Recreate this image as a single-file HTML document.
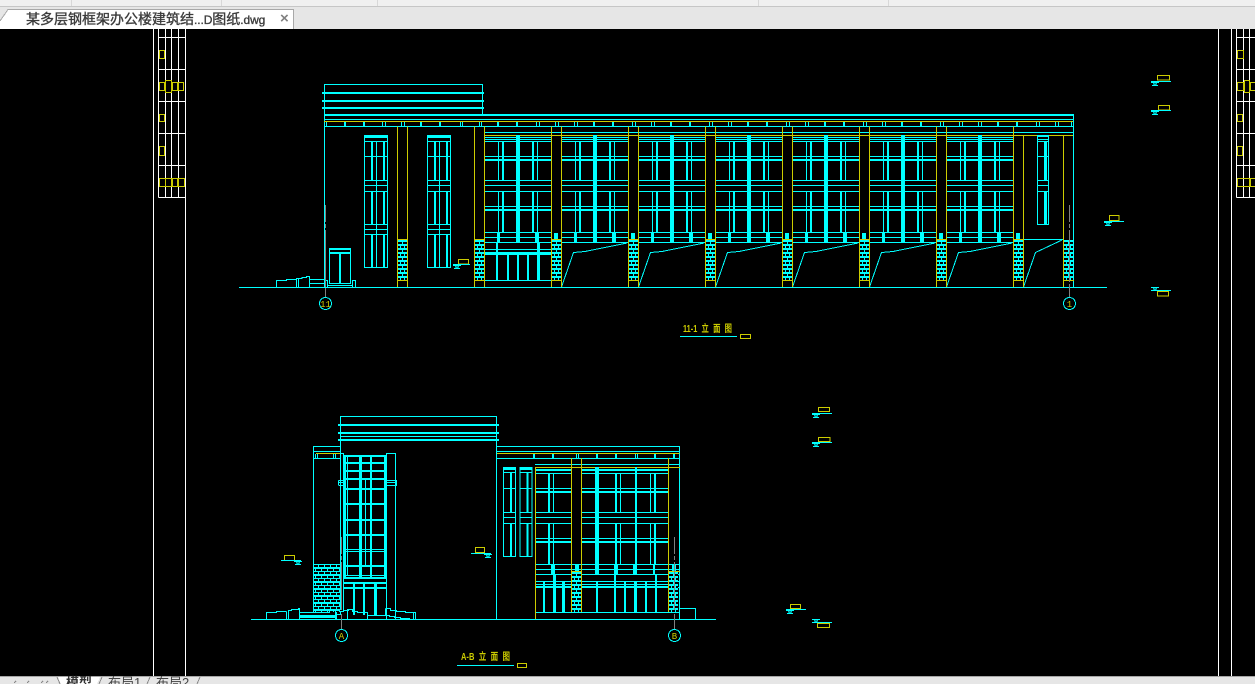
<!DOCTYPE html>
<html lang="zh">
<head>
<meta charset="utf-8">
<title>某多层钢框架办公楼建筑结...D图纸.dwg</title>
<style>
html,body{margin:0;padding:0;width:1255px;height:684px;overflow:hidden;background:#e6e6e6}
body{position:relative;font-family:"Liberation Sans","Noto Sans CJK SC",sans-serif}
.top{position:absolute;left:0;top:0;width:1255px;height:6px;background:#f0f0f0;border-bottom:1px solid #c6c6c6}
.sep{position:absolute;top:0;width:1px;height:6px;background:#d8d8d8}
.name{position:absolute;left:26px;top:10px;font-size:14px;line-height:18px;color:#3c3c3c;white-space:nowrap;-webkit-text-stroke:0.35px #3c3c3c}
.name span{font-size:12px;letter-spacing:-.1px}
.x{position:absolute;left:280px;top:10px;font-size:15px;line-height:18px;color:#808080;font-weight:700}
.bt{position:absolute;top:675px;font-size:13px;line-height:16px;color:#444;white-space:nowrap}
svg{position:absolute;left:0;top:0}
</style>
</head>
<body>
<div class="top"></div>
<div class="sep" style="left:71px"></div><div class="sep" style="left:221px"></div><div class="sep" style="left:377px"></div><div class="sep" style="left:758px"></div><div class="sep" style="left:888px"></div>

<svg width="1255" height="684" viewBox="0 0 1255 684" shape-rendering="crispEdges">
<!-- tab -->
<path d="M0 29 V20 L8 9.5 H293.5 V29 Z" fill="#fff"/>
<path d="M0 21 L8 9.5 H293.5 V29" fill="none" stroke="#a8a8a8"/>
<!-- canvas -->
<rect x="0" y="29" width="1255" height="647" fill="#000"/>
<defs>
<pattern id="bk2" width="12" height="7" patternUnits="userSpaceOnUse">
<path fill="#0ff" d="M0 0h12v2h-12zM0 4h12v1h-12zM3 2h1v2h-1zM9 2h1v2h-1zM0 5h1v2h-1zM6 5h1v2h-1z"/>
</pattern>
<path id="b8" fill="#000" d="M0 2h4v2h-4zM5 2h4v2h-4zM0 6h2v2h-2zM3 6h3v2h-3zM7 6h2v2h-2z"/>
<g id="bricks">
<rect x="0" y="0" width="9" height="40" fill="#0ff"/>
<use href="#b8"/>
<use href="#b8" y="8"/>
<use href="#b8" y="16"/>
<use href="#b8" y="24"/>
<use href="#b8" y="32"/>
</g>

<g id="bayTop">
<path fill="none" stroke="#0ff" d="M484.5 137.5H551.5M484.5 139.5H551.5M484.5 141.5H551.5M484.5 156.5H551.5M484.5 180.5H551.5M484.5 185.5H551.5M484.5 206.5H551.5M484.5 232.5H551.5M484.5 237.5H551.5M484.5 242.5H551.5M498.5 141V180M537.5 141V180M498.5 191V232M537.5 191V232"/>
<path fill="none" stroke="#0ff" d="M484.5 191.5H551.5"/>
<path fill="#0ff" d="M484 159h68v2h-68zM484 209h68v2h-68zM502 141h2v39h-2zM532 141h2v39h-2zM502 191h2v41h-2zM532 191h2v41h-2zM516 135h4v107h-4zM497 233h3v9h-3zM535 233h4v9h-4zM554 233h4v7h-4z"/>
</g>
<path id="ramp" fill="none" stroke="#0ff" d="M561.5 287L573.5 252.5L585 251.5L627 243"/>
<g id="win">
<rect x="364.5" y="135.5" width="23" height="132" fill="none" stroke="#0ff"/>
<path fill="#0ff" d="M364 135h24v3h-24zM371 141h2v39h-2zM383 141h2v39h-2zM371 191h2v33h-2zM383 191h2v33h-2zM371 234h2v33h-2zM383 234h2v33h-2z"/>
<path fill="none" stroke="#0ff" d="M364.5 141.5H387.5M364.5 156.5H387.5M364.5 180.5H387.5M364.5 185.5H387.5M364.5 191.5H387.5M364.5 224.5H387.5M364.5 229.5H387.5M364.5 234.5H387.5M376.5 141V267"/>
</g>
<g id="lvl"><path fill="none" stroke="#0ff" d="M0 .5H8M1 3.5H7M2.5 .5L3.5 3.5M5.5 .5L4.5 3.5"/></g>
<g id="lwin">
<rect x="503.5" y="467.5" width="12" height="89" fill="none" stroke="#0ff"/>
<path fill="#0ff" d="M503 467h13v3h-13zM510 473h2v39h-2zM510 523h2v33h-2z"/>
<path fill="none" stroke="#0ff" d="M503.5 472.5H516M503.5 488.5H516M503.5 512.5H516M503.5 517.5H516M503.5 523.5H516"/>
</g>
</defs>

<!-- side frames -->
<path fill="none" stroke="#fff" d="M153.5 29V676M185.5 29V676M1218.5 29V676M1231.5 29V676"/>
<path fill="none" stroke="#fff" d="M158.5 29V197.5M165.5 29V197M171.5 29V197M178.5 29V197M158.5 37.5H185.5M158.5 69.5H185.5M158.5 101.5H185.5M158.5 133.5H185.5M158.5 165.5H185.5M158.5 197.5H185.5"/>
<path fill="none" stroke="#fff" d="M1236.5 29V197.5M1243.5 29V197M1249.5 29V197M1236.5 37.5H1255M1236.5 69.5H1255M1236.5 101.5H1255M1236.5 133.5H1255M1236.5 165.5H1255M1236.5 197.5H1255"/>
<path fill="none" stroke="#cc0" d="M159.5 50.5h5v8h-5zM159.5 82.5h5v8h-5zM165.5 80.5h6v12h-6zM172.5 82.5h5v8h-5zM178.5 82.5h5v8h-5zM159.5 114.5h5v7h-5zM159.5 146.5h5v9h-5zM159.5 178.5h6v8h-6zM165.5 178.5h6v8h-6zM172.5 178.5h5v8h-5zM178.5 178.5h6v8h-6z"/>
<path fill="none" stroke="#cc0" d="M1237.5 50.5h6v8h-6zM1237.5 82.5h6v8h-6zM1244.5 80.5h5v12h-5zM1250.5 82.5h5v8h-5zM1237.5 114.5h5v7h-5zM1237.5 146.5h5v9h-5zM1237.5 178.5h12v8h-12zM1250.5 178.5h5v8h-5z"/>

<!-- TOP ELEVATION -->
<rect x="324.5" y="84.5" width="158" height="31" fill="none" stroke="#0ff"/>
<path fill="#0ff" d="M322 92h162v2h-162zM322 100h162v2h-162zM322 107h162v2h-162zM324 114h750v2h-750z"/>
<path fill="none" stroke="#0ff" d="M324.5 115V287M1073.5 115V287M324 119.5H1073M324 126.5H1073M484 132.5H1073"/>
<path fill="none" stroke="#cc0" d="M324 121.5H1073M484 135.5H1073"/>
<path fill="none" stroke="#0ff" stroke-width="2" d="M345 122v4M364 122v4M421 122v4M440 122v4M498 122v4M517 122v4M594 122v4M613 122v4M671 122v4M690 122v4M748 122v4M767 122v4M825 122v4M844 122v4M902 122v4M921 122v4M998 122v4M1017 122v4"/>
<path fill="none" stroke="#0ff" d="M326.5 122v4M382.5 122v4M385.5 122v4M401.5 122v4M404.5 122v4M460.5 122v4M462.5 122v4M479.5 122v4M481.5 122v4M536.5 122v4M539.5 122v4M555.5 122v4M558.5 122v4M574.5 122v4M577.5 122v4M632.5 122v4M635.5 122v4M651.5 122v4M654.5 122v4M709.5 122v4M712.5 122v4M728.5 122v4M731.5 122v4M786.5 122v4M789.5 122v4M805.5 122v4M808.5 122v4M863.5 122v4M866.5 122v4M882.5 122v4M885.5 122v4M940.5 122v4M943.5 122v4M959.5 122v4M962.5 122v4M978.5 122v4M981.5 122v4M1036.5 122v4M1039.5 122v4M1055.5 122v4M1058.5 122v4M1071.5 122v4"/>

<use href="#win"/><use href="#win" transform="translate(63 0)"/>

<use href="#bayTop"/>
<use href="#bayTop" transform="translate(77 0)"/>
<use href="#bayTop" transform="translate(154 0)"/>
<use href="#bayTop" transform="translate(231 0)"/>
<use href="#bayTop" transform="translate(308 0)"/>
<use href="#bayTop" transform="translate(385 0)"/>
<use href="#bayTop" transform="translate(462 0)"/>

<!-- first bay door -->
<path fill="none" stroke="#0ff" d="M484.5 249.5H551.5M484.5 254.5H551.5M484.5 280.5H551.5M507.5 254V280M517.5 254V280M527.5 254V280"/>
<path fill="#0ff" d="M484 252h68v2h-68zM496 242h2v38h-2zM537 242h3v38h-3zM507 254h2v26h-2zM517 254h2v26h-2zM527 254h2v26h-2z"/>

<use href="#ramp"/><use href="#ramp" transform="translate(77 0)"/><use href="#ramp" transform="translate(154 0)"/><use href="#ramp" transform="translate(231 0)"/><use href="#ramp" transform="translate(308 0)"/><use href="#ramp" transform="translate(385 0)"/>
<path fill="none" stroke="#0ff" d="M1023.5 287L1035.5 252.5L1062 240M1023 239.5H1063"/>

<!-- right end -->
<rect x="1037.5" y="135.5" width="11" height="89" fill="none" stroke="#0ff"/>
<path fill="#0ff" d="M1037 135h12v2h-12zM1044 141h3v39h-3zM1044 191h3v33h-3z"/>
<path fill="none" stroke="#0ff" d="M1037.5 139.5H1048M1037.5 141.5H1048M1037.5 156.5H1048M1037.5 180.5H1048M1037.5 185.5H1048M1037.5 191.5H1048"/>

<!-- bricks -->
<use href="#bricks" transform="translate(398 240)"/>
<use href="#bricks" transform="translate(475 240)"/>
<use href="#bricks" transform="translate(552 240)"/>
<use href="#bricks" transform="translate(629 240)"/>
<use href="#bricks" transform="translate(706 240)"/>
<use href="#bricks" transform="translate(783 240)"/>
<use href="#bricks" transform="translate(860 240)"/>
<use href="#bricks" transform="translate(937 240)"/>
<use href="#bricks" transform="translate(1014 240)"/>
<use href="#bricks" transform="translate(1064 240)"/>

<!-- columns -->
<path fill="none" stroke="#cc0" d="M397.5 126.5V287M407.5 126.5V287M397 239.5H408M397 280.5H408M474.5 126.5V287M484.5 126.5V287M474 239.5H485M474 280.5H485M551.5 126.5V287M561.5 126.5V287M551 239.5H562M551 280.5H562M628.5 126.5V287M638.5 126.5V287M628 239.5H639M628 280.5H639M705.5 126.5V287M715.5 126.5V287M705 239.5H716M705 280.5H716M782.5 126.5V287M792.5 126.5V287M782 239.5H793M782 280.5H793M859.5 126.5V287M869.5 126.5V287M859 239.5H870M859 280.5H870M936.5 126.5V287M946.5 126.5V287M936 239.5H947M936 280.5H947M1013.5 126.5V287M1023.5 135.5V287M1013 239.5H1024M1013 280.5H1024M1063.5 135.5V287M1063 280.5H1074"/>

<!-- left door & steps -->
<rect x="329.5" y="248.5" width="21" height="35" fill="none" stroke="#0ff"/>
<path fill="#0ff" d="M329 248h22v2h-22zM329 252h22v2h-22zM339 252h2v31h-2z"/>
<path fill="none" stroke="#0ff" d="M327 285.5H352M276.5 287V280.5H286.5V279.5H296.5V278.5H302V277.5H306.5V276.5H309.5V287M296.5 279V287M298.5 279V287M309.5 279.5H324M309.5 283.5H324M324.5 280.5H327.5V287M352.5 287V280.5H355.5V287"/>

<!-- ground -->
<path fill="none" stroke="#0ff" d="M239 287.5H1107"/>
<!-- axes -->
<path fill="none" stroke="#808080" d="M325.5 205V222M325.5 224V228M325.5 230V287M325.5 288V297M1069.5 205V222M1069.5 224V228M1069.5 230V282M1069.5 284V297"/>
<circle cx="325.5" cy="303.5" r="6" fill="#000" stroke="#0ff"/>
<circle cx="1069.5" cy="303.5" r="6" fill="#000" stroke="#0ff"/>
<text x="325.5" y="307" text-anchor="middle" font-family="'Liberation Mono',monospace" font-size="9" fill="#cc0">11</text>
<text x="1069.5" y="307" text-anchor="middle" font-family="'Liberation Mono',monospace" font-size="9" fill="#cc0">1</text>

<!-- title 1 -->
<text x="683" y="332" textLength="49" lengthAdjust="spacingAndGlyphs" font-family="'Liberation Sans','Noto Sans CJK SC',sans-serif" font-size="10" font-weight="700" fill="#cc0" word-spacing="3">11-1 立 面 图</text>
<path fill="none" stroke="#0ff" d="M680 336.5H737"/>
<rect x="740.5" y="334.5" width="10" height="4" fill="none" stroke="#cc0"/>

<!-- level markers -->
<g fill="none" stroke="#cc0">
<rect x="1157.5" y="75.5" width="12" height="4.5"/>
<rect x="1158.5" y="105.5" width="11" height="4.5"/>
<rect x="1109.5" y="215.5" width="9.5" height="5"/>
<rect x="1157.5" y="291.5" width="11" height="4.5"/>
<rect x="458.5" y="259.5" width="10" height="4.5"/>
<rect x="818.5" y="407.5" width="11" height="4"/>
<rect x="818.5" y="437.5" width="11.5" height="4"/>
<rect x="790.5" y="604.5" width="10" height="4"/>
<rect x="817.5" y="623.5" width="12" height="4"/>
<rect x="475.5" y="547.5" width="9" height="5"/>
<rect x="284.5" y="555.5" width="10" height="5"/>
</g>
<path fill="none" stroke="#0ff" d="M1151 81.5H1171M1151 110.5H1171M1104 221.5H1124M1151 290.5H1171M453 264.5H470M812 413.5H832M812 442.5H832M786 609.5H806M812 622.5H832M471 553.5H491M281 560.5H301"/>
<use href="#lvl" transform="translate(1151 82)"/>
<use href="#lvl" transform="translate(1151 111)"/>
<use href="#lvl" transform="translate(1104 222)"/>
<use href="#lvl" transform="translate(1151 287)"/>
<use href="#lvl" transform="translate(453 265)"/>
<use href="#lvl" transform="translate(812 414)"/>
<use href="#lvl" transform="translate(812 443)"/>
<use href="#lvl" transform="translate(786 610)"/>
<use href="#lvl" transform="translate(812 619)"/>
<use href="#lvl" transform="translate(484 554)"/>
<use href="#lvl" transform="translate(294 561)"/>

<!-- LOWER ELEVATION: tower -->
<rect x="340.5" y="416.5" width="156" height="20" fill="none" stroke="#0ff"/>
<path fill="#0ff" d="M338 424h161v2h-161zM338 432h161v2h-161zM338 439h161v2h-161z"/>
<path fill="none" stroke="#0ff" d="M340.5 436V610M496.5 436V619M343.5 453V610M340 453.5H343M386 453.5H395.5V619M386.5 453V619M313.5 446.5V612M313 446.5H340M313 451.5H340M313 458.5H340M315.5 454V458M317.5 454V458M333.5 454V458M335.5 454V458M338.5 480.5H344M338.5 482.5H344M338.5 485.5H344M338.5 480.5V485M386 480.5H397M386 482.5H397M386 485.5H397M396.5 480.5V485"/>
<path fill="none" stroke="#cc0" d="M316 453.5H340"/>
<!-- tower glazing -->
<path fill="#0ff" d="M344 455h42v2h-42zM344 462h42v2h-42zM344 470h42v2h-42zM344 478h42v2h-42zM344 488h42v2h-42zM344 503h42v2h-42zM344 519h42v2h-42zM344 534h42v2h-42zM344 565h42v2h-42zM344 455h2v122h-2zM359 455h3v122h-3zM370 455h2v122h-2zM384 455h2v122h-2z"/>
<path fill="none" stroke="#0ff" d="M344 549.5H386M344 551.5H386M344 575.5H386M347.5 455V576M365.5 480V565"/>
<path fill="#0ff" d="M344 577h42v2h-42zM344 582h42v2h-42zM344 587h42v2h-42zM353 582h2v33h-2zM363 582h2v33h-2zM374 582h3v33h-3z"/>
<!-- lower-left bricks -->
<rect x="314" y="565" width="26" height="47" fill="url(#bk2)"/>
<path fill="none" stroke="#0ff" d="M314 564.5H340"/>
<!-- stairs -->
<path fill="none" stroke="#0ff" d="M266.5 619V612.5H276.5V611.5H286.5M286.5 619V611.5M288.5 619V610.5H291.5V609.5H298.5V608.5H299.5V619M299.5 612.5H329.5V609.5H335.5V619M336.5 612V619M336.5 614.5H340.5V611.5H343.5V610.5H348.5V609.5H352.5V611.5H357.5V612.5H367.5V619M347.5 609V619M367.5 615.5H389.5V616.5H394.5V617.5H400.5V618.5H410M385.5 608.5V615M385.5 608.5H390.5V610.5H396.5V611.5H405.5V612.5H415.5V619M413.5 612V619"/>
<path fill="#0ff" d="M300 615h35v3h-35z"/>

<!-- right wing -->
<path fill="none" stroke="#0ff" d="M497 446.5H679.5M497 451.5H679.5M497 458.5H679.5M535 464.5H679.5M679.5 446V619"/>
<path fill="none" stroke="#cc0" d="M497 453.5H679.5M535.5 467.5H680"/>
<path fill="#0ff" d="M533 454h2v4h-2zM552 454h2v4h-2zM596 454h2v4h-2zM615 454h2v4h-2zM654 454h2v4h-2zM673 454h2v4h-2z"/>
<path fill="none" stroke="#0ff" d="M576.5 454v4M578.5 454v4M635.5 454v4M637.5 454v4"/>
<use href="#lwin"/><use href="#lwin" transform="translate(16.5 0)"/>

<path fill="none" stroke="#0ff" d="M535.5 469.5H571M535.5 470.5H571M535.5 473.5H571M535.5 488.5H571M535.5 512.5H571M535.5 517.5H571M535.5 523.5H571M535.5 538.5H571M535.5 564.5H680M535.5 569.5H680M535.5 574.5H680M582 469.5H668M582 470.5H668M582 473.5H668M582 488.5H668M582 512.5H668M582 517.5H668M582 523.5H668M582 538.5H668M553.5 473V512M553.5 523V564M620.5 473V512M620.5 523V564M650.5 473V512M650.5 523V564M635.5 467V574M636.5 467V574"/>
<path fill="#0ff" d="M536 491h35v2h-35zM536 541h35v2h-35zM582 491h86v2h-86zM582 541h86v2h-86zM548 473h2v39h-2zM548 523h2v41h-2zM595 467h4v107h-4zM615 473h2v39h-2zM615 523h2v41h-2zM654 473h2v39h-2zM654 523h2v41h-2z"/>
<path fill="#0ff" d="M551 565h4v9h-4zM575 565h4v9h-4zM595 565h4v9h-4zM614 565h4v9h-4zM633 565h2v9h-2zM653 565h2v9h-2zM672 565h4v9h-4zM553 574h3v8h-3zM614 574h2v8h-2zM655 574h2v8h-2z"/>
<path fill="none" stroke="#0ff" d="M535.5 581.5H680M535.5 587.5H680M535.5 612.5H680"/>
<path fill="#0ff" d="M536 584h132v1h-132zM536 586h132v2h-132zM543 582h2v30h-2zM553 582h3v30h-3zM562 582h3v30h-3zM596 582h2v30h-2zM614 582h2v30h-2zM624 582h2v30h-2zM634 582h3v30h-3zM645 582h2v30h-2zM655 582h2v30h-2z"/>
<use href="#bricks" transform="translate(572 572)"/>
<use href="#bricks" transform="translate(669 572)"/>
<path fill="none" stroke="#cc0" d="M535.5 467V619M571.5 458V612M581.5 458V612M571 571.5H582M668.5 458V612M668 571.5H680"/>
<path fill="none" stroke="#0ff" d="M680 608.5H695.5V619"/>

<!-- ground 2 & axes -->
<path fill="none" stroke="#0ff" d="M251 619.5H716"/>
<path fill="none" stroke="#808080" d="M341.5 537V554M341.5 556V560M341.5 562V610M341.5 614V630M674.5 537V554M674.5 556V560M674.5 562V610M674.5 614V630"/>
<circle cx="341.5" cy="635.5" r="6" fill="#000" stroke="#0ff"/>
<circle cx="674.5" cy="635.5" r="6" fill="#000" stroke="#0ff"/>
<text x="341.5" y="639" text-anchor="middle" font-family="'Liberation Mono',monospace" font-size="9" fill="#cc0">A</text>
<text x="674.5" y="639" text-anchor="middle" font-family="'Liberation Mono',monospace" font-size="9" fill="#cc0">B</text>

<!-- title 2 -->
<text x="461" y="660" textLength="49" lengthAdjust="spacingAndGlyphs" font-family="'Liberation Sans','Noto Sans CJK SC',sans-serif" font-size="10" font-weight="700" fill="#cc0" word-spacing="3">A-B 立 面 图</text>
<path fill="none" stroke="#0ff" d="M457 665.5H514"/>
<rect x="517.5" y="663.5" width="9" height="4" fill="none" stroke="#cc0"/>

<!-- bottom bar -->
<rect x="0" y="676" width="1255" height="8" fill="#e6e6e6"/>
<path d="M0 676.5H1255" stroke="#a6a6a6"/>
<path d="M58 677H100L97 684H61Z" fill="#fff"/>
<path fill="none" stroke="#8a8a8a" d="M57 677L60 684M102 677L99 684M150 677L147 684M200 677L197 684"/>
<path fill="none" stroke="#888" d="M14 683L16 681M27 683L29 681M41 683L43 681M46 683L48 681"/>
</svg>

<div class="name">某多层钢框架办公楼建筑结<span>...D</span>图纸<span>.dwg</span></div>
<div class="x">×</div>
<div class="bt" style="left:66px;font-weight:700;color:#333">模型</div>
<div class="bt" style="left:108px">布局1</div>
<div class="bt" style="left:156px">布局2</div>
</body>
</html>
